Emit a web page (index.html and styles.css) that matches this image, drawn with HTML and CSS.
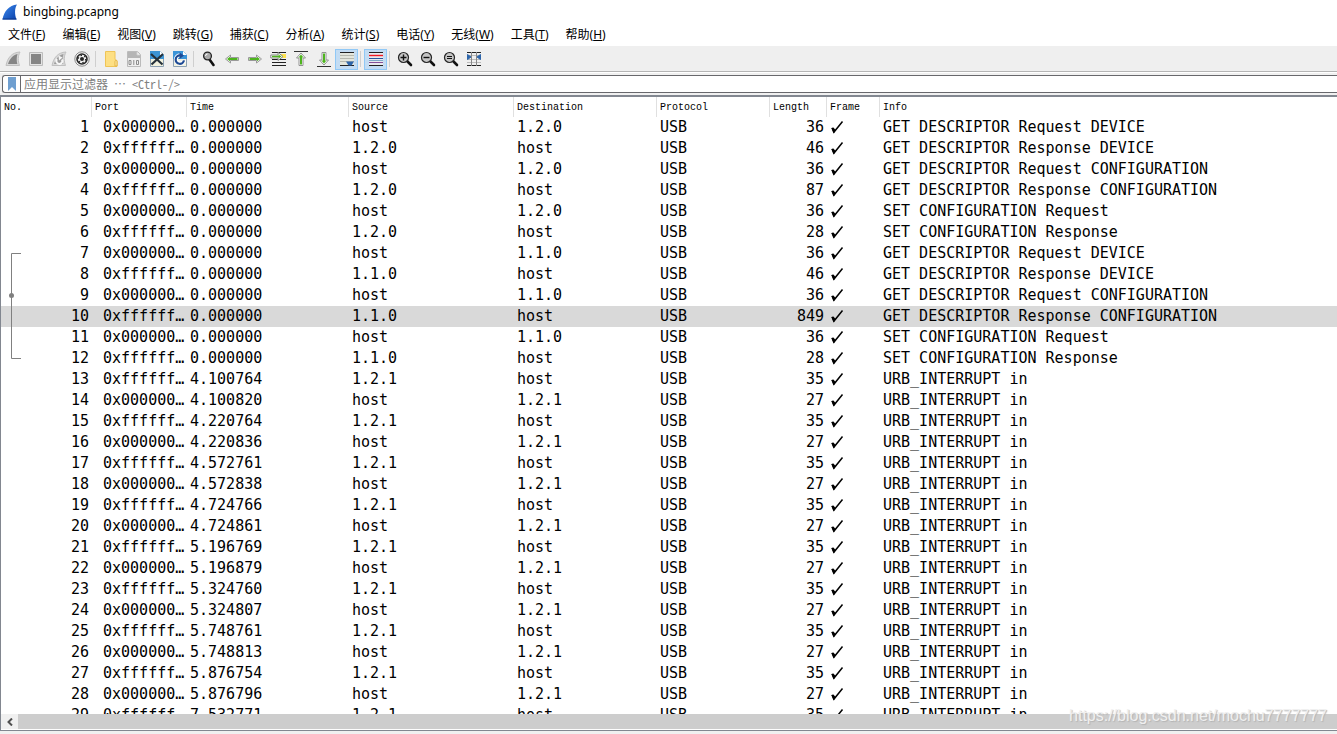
FILE: index.html
```html
<!DOCTYPE html>
<html lang="zh-CN">
<head>
<meta charset="utf-8">
<title>bingbing.pcapng</title>
<link rel="stylesheet" href="styles.css">
</head>
<body>
<div class="window">
  <header class="titlebar">
    <svg class="app-icon" width="16" height="16" viewBox="0 0 16 16" aria-hidden="true">
      <defs><linearGradient id="fin" x1="0" y1="0" x2="1" y2="1"><stop offset="0" stop-color="#3d8cf0"/><stop offset="1" stop-color="#0a3fa8"/></linearGradient></defs>
      <path d="M0.5 15.5C2 7 7 1.5 15 0.5C12.500 4.500 12.500 10 14.500 15.500Z" fill="url(#fin)"/>
      <path d="M0.500 15H14.500" stroke="#0a3588"/>
    </svg>
    <span>bingbing.pcapng</span>
  </header>
  <nav class="menubar">
    <button>文件(<u>F</u>)</button>
    <button>编辑(<u>E</u>)</button>
    <button>视图(<u>V</u>)</button>
    <button>跳转(<u>G</u>)</button>
    <button>捕获(<u>C</u>)</button>
    <button>分析(<u>A</u>)</button>
    <button>统计(<u>S</u>)</button>
    <button>电话(<u>Y</u>)</button>
    <button>无线(<u>W</u>)</button>
    <button>工具(<u>T</u>)</button>
    <button>帮助(<u>H</u>)</button>
  </nav>
  <div class="toolbar" role="toolbar">
    <button aria-label="Start capture"><svg viewBox="0 0 16 16"><path d="M1 14.500C2.500 7 6.500 1.500 15 1C12.800 5 12.800 10 14.500 14.500Z" fill="#d8d8d8" stroke="#c0c0c0"/><path d="M3 13C4.500 8 8 4 12.500 3C11.500 6 11.500 10 12.300 13Z" fill="#858585"/></svg></button>
    <button aria-label="Stop capture"><svg viewBox="0 0 16 16"><path d="M1.500 1.500h13v13h-13z" fill="#e4e4e4" stroke="#bdbdbd"/><path d="M3 3h10v10H3z" fill="#858585"/></svg></button>
    <button aria-label="Restart capture"><svg viewBox="0 0 16 16"><path d="M1 14.500C2.500 7 6.500 1.500 15 1C12.800 5 12.800 10 14.500 14.500Z" fill="#d8d8d8" stroke="#c0c0c0"/><path d="M3 13C4.500 8 8 4 12.500 3C11.500 6 11.500 10 12.300 13Z" fill="#9c9c9c"/><path d="M6 8a3 3 0 1 0 5 .5" fill="none" stroke="#f6f6f6" stroke-width="2"/><path d="M7.500 4.500l4 2-3.500 3z" fill="#f6f6f6"/></svg></button>
    <button aria-label="Capture options"><svg viewBox="0 0 16 16"><circle cx="8" cy="8" r="7.200" fill="#f6f6f6" stroke="#888"/><circle cx="8" cy="8" r="5" fill="#eee" stroke="#242424" stroke-width="1.600"/><circle cx="8" cy="8" r="3.700" fill="none" stroke="#242424" stroke-width="1.200" stroke-dasharray="1.500 2.370"/><circle cx="8" cy="8" r="2" fill="#242424"/></svg></button>
    <i class="sep"></i>
    <button aria-label="Open"><svg viewBox="0 0 16 16"><path d="M2.500 .500h9.500v8l2 1v6H2.500z" fill="#fddf83" stroke="#efc456"/><path d="M12 15V10.500q0-1 1-1t1 1V15z" fill="#fff0b8" stroke="#e5b440"/></svg></button>
    <button aria-label="Save"><svg viewBox="0 0 16 16"><path d="M1.500 .500h10l3 3v12h-13z" fill="#efefef" stroke="#bbb"/><path d="M2 1h9l3 3v3H2z" fill="#b5b5b5"/><path d="M11 1v3h3" fill="#fff" stroke="#ccc"/><path d="M3 9.500h2v4H3zM10.500 9.500h2v4h-2zM7.800 9v5" fill="none" stroke="#8c8c8c"/></svg></button>
    <button aria-label="Close"><svg viewBox="0 0 16 16"><path d="M1.500 .500h10l3 3v12h-13z" fill="#f2f2df" stroke="#8da1b3"/><path d="M1 0h10l4 4v4H1z" fill="#3d94d4"/><path d="M11 0v4h4" fill="#fff"/><path d="M2 3l11.500 10.500M14 3l-11.500 10.500" stroke="#26313a" stroke-width="2.200"/></svg></button>
    <button aria-label="Reload"><svg viewBox="0 0 16 16"><path d="M1.500 .500h10l3 3v12h-13z" fill="#f2f2df" stroke="#8da1b3"/><path d="M1 0h10l4 4v4H1z" fill="#3b94d8"/><path d="M11 0v4h4" fill="#fff"/><path d="M8 4.200a4.200 4.200 0 1 0 4.200 5" fill="none" stroke="#fff" stroke-width="4"/><path d="M8 4.400a4.200 4.200 0 1 0 4 5" fill="none" stroke="#1e4a94" stroke-width="2.200"/><path d="M7.500 1.500l4.500 3-4.500 3.500z" fill="#1e4a94"/></svg></button>
    <i class="sep"></i>
    <button aria-label="Find"><svg viewBox="0 0 16 16"><path d="M8.500 8.500l4 5.500" stroke="#111" stroke-width="2.600" stroke-linecap="round"/><circle cx="6.500" cy="5" r="3.900" fill="#aaa" stroke="#252525" stroke-width="1.300"/><path d="M4.500 5a2 2 0 0 1 2-2" fill="none" stroke="#fff"/></svg></button>
    <button aria-label="Previous packet"><svg viewBox="0 0 16 16"><path d="M1.500 8l5-4v2.500h8v3h-8v2.500z" fill="#fff" stroke="#999" stroke-linejoin="round"/><path d="M3 8l3-2.300v1.300h7.500v2H6v1.300z" fill="#4eb41e"/></svg></button>
    <button aria-label="Next packet"><svg viewBox="0 0 16 16"><path d="M14.500 8l-5-4v2.500h-8v3h8v2.500z" fill="#fff" stroke="#999" stroke-linejoin="round"/><path d="M13 8l-3-2.300v1.300H2.500v2H10v1.300z" fill="#4eb41e"/></svg></button>
    <button aria-label="Go to packet"><svg viewBox="0 0 16 16"><path d="M2 1.500h14M2 11.500h14M2 14.500h14" stroke="#222" stroke-width="1.200"/><path d="M11 3h5v4h-5z" fill="#ffe34d"/><path d="M2 8.500h14" stroke="#222"/><path d="M13 5.500l-5-4v2.500H.800v3H8v2.500z" fill="#fff" stroke="#888"/><path d="M11.500 5.500l-3-2v1.200H2v1.600h6.500v1.200z" fill="#4eb41e"/></svg></button>
    <button aria-label="First packet"><svg viewBox="0 0 16 16"><path d="M1 .500h14" stroke="#333"/><path d="M8 2l4.500 5h-2.500v7.500H6V7H3.500z" fill="#fff" stroke="#929292" stroke-linejoin="round"/><path d="M8 3.500l2.500 3H9v7H7v-7H5.500z" fill="#4eb41e"/></svg></button>
    <button aria-label="Last packet"><svg viewBox="0 0 16 16"><path d="M1 15.500h14" stroke="#333"/><path d="M8 14l4.500-5h-2.500V1.500H6V9H3.500z" fill="#fff" stroke="#929292" stroke-linejoin="round"/><path d="M8 12.500l2.500-3H9v-7H7v7H5.500z" fill="#4eb41e"/></svg></button>
    <button class="on" aria-label="Auto scroll" aria-pressed="true"><svg viewBox="0 0 16 16"><path d="M1 2h14v12H1z" fill="#e4e6dc"/><path d="M1 1.500h14M1 14.500h14" stroke="#222"/><path d="M1 4.500h14M1 7.500h14M1 10.500h14" stroke="#b6b8ae"/><path d="M7 10.500h8l-2.500 4h-3z" fill="#2d65aa"/></svg></button>
    <i class="sep"></i>
    <button class="on" aria-label="Colorize" aria-pressed="true"><svg viewBox="0 0 16 16"><path d="M1 1h14v14H1z" fill="#e9e9ee"/><path d="M1 1.500h14M1 14.500h14" stroke="#222"/><path d="M1 4.500h14" stroke="#f01822" stroke-width="1.400"/><path d="M1 7.500h14" stroke="#28569c"/><path d="M1 9.500h14" stroke="#7fa9c9"/><path d="M1 11.500h14" stroke="#855099"/></svg></button>
    <i class="sep"></i>
    <button aria-label="Zoom in"><svg viewBox="0 0 16 16"><path d="M10.500 10.500l3.500 3.500" stroke="#111" stroke-width="2.600" stroke-linecap="round"/><circle cx="6.500" cy="6.500" r="5" fill="#c5c5c5" stroke="#252525" stroke-width="1.200"/><path d="M3.500 6.500h6M6.500 3.500v6" stroke="#111" stroke-width="1.400"/></svg></button>
    <button aria-label="Zoom out"><svg viewBox="0 0 16 16"><path d="M10.500 10.500l3.500 3.500" stroke="#111" stroke-width="2.600" stroke-linecap="round"/><circle cx="6.500" cy="6.500" r="5" fill="#c5c5c5" stroke="#252525" stroke-width="1.200"/><path d="M3.500 6.500h6" stroke="#111" stroke-width="1.400"/></svg></button>
    <button aria-label="Normal size"><svg viewBox="0 0 16 16"><path d="M10.500 10.500l3.500 3.500" stroke="#111" stroke-width="2.600" stroke-linecap="round"/><circle cx="6.500" cy="6.500" r="5" fill="#c5c5c5" stroke="#252525" stroke-width="1.200"/><path d="M4 5.500h5M4 7.500h5" stroke="#111"/></svg></button>
    <button aria-label="Resize columns"><svg viewBox="0 0 16 16"><path d="M1 1.500h14M1 14.500h14" stroke="#222"/><path d="M1 4.500h14M1 8.500h14M1 11.500h14" stroke="#bbb"/><path d="M5.500 1v14M10.500 1v14" stroke="#888"/><path d="M1.500 3.500l3.500 2.500-3.500 2.500zM14.500 3.500l-3.500 2.500 3.500 2.500z" fill="#2d65aa" stroke="#2d65aa"/></svg></button>
  </div>
  <div class="filter-row">
    <div class="filter">
      <button class="bookmark" aria-label="Bookmarks"><svg width="8" height="14" viewBox="0 0 8 14"><path d="M0 0h8v14l-4-4-4 4z" fill="#6f9fd0"/></svg></button>
      <input class="filter-input" type="text" aria-label="应用显示过滤器" placeholder="应用显示过滤器 ⋯ &lt;Ctrl-/&gt;">
    </div>
  </div>
  <main class="packets">
    <div class="list">
      <table>
        <colgroup><col class="c-no"><col class="c-port"><col class="c-time"><col class="c-src"><col class="c-dst"><col class="c-proto"><col class="c-len"><col class="c-frame"><col></colgroup>
        <thead><tr><th>No.</th><th>Port</th><th>Time</th><th>Source</th><th>Destination</th><th>Protocol</th><th>Length</th><th>Frame</th><th>Info</th></tr></thead>
        <tbody id="rows"></tbody>
      </table>
      <svg class="related" width="12" height="106" viewBox="0 0 12 106" aria-hidden="true"><path d="M12 .5H2.500V105.500H12" fill="none" stroke="#808080"/><circle cx="2.500" cy="42.500" r="2.500" fill="#808080"/></svg>
    </div>
    <div class="scrollbar">
      <button class="scroll-left" aria-label="Scroll left"><svg width="6" height="8" viewBox="0 0 6 8"><path d="M5 .5L1.500 4L5 7.500" fill="none" stroke="#505050" stroke-width="2"/></svg></button>
      <div class="thumb"></div>
    </div>
    <div class="watermark">https://blog.csdn.net/mochu7777777</div>
  </main>
  <footer class="edge"></footer>
</div>
<script src="packets.js"></script>
</body>
</html>
```

FILE: styles.css
```css
* { box-sizing: border-box; }

body {
  margin: 0;
  background: #fff;
  color: #000;
  font: 12px/16px "Noto Sans", "Noto Sans CJK SC", sans-serif;
}

button {
  margin: 0;
  padding: 0;
  border: 0;
  background: none;
  color: inherit;
  font: inherit;
}

.window {
  display: flex;
  flex-direction: column;
  height: 100vh;
  overflow: hidden;
}

.titlebar {
  display: flex;
  align-items: center;
  gap: 5px;
  height: 24px;
  padding-left: 2px;
}

.menubar {
  display: flex;
  align-items: center;
  gap: 17px;
  height: 22px;
  padding-left: 8px;
}

.menubar button { white-space: nowrap; }

.toolbar {
  display: flex;
  align-items: center;
  height: 26px;
  padding: 1px 0 0 1px;
  background: #efefef;
  border-bottom: 1px solid #b4b4b4;
}

.toolbar button {
  display: flex;
  align-items: center;
  justify-content: center;
  width: 23px;
  height: 21px;
}

.toolbar svg { width: 16px; height: 16px; }

.toolbar .on {
  background: #c3dcf3;
  border: 1px solid #90c8f6;
}

.sep {
  width: 1px;
  height: 16px;
  margin: 0 3px 0 2px;
  background: #cfcfcf;
}

.filter-row {
  padding: 3px 0 2px 2px;
  background: linear-gradient(#fff 1px, #f0f0f0 1px);
}

.filter {
  display: flex;
  height: 18px;
  background: #fff;
  border: 1px solid #68686c;
  border-right: 0;
  border-radius: 3px 0 0 3px;
}

.bookmark {
  display: flex;
  align-items: center;
  justify-content: center;
  width: 18px;
  border-right: 1px solid #68686c;
}

.filter-input {
  flex: 1;
  min-width: 0;
  padding: 0 3px;
  border: 0;
  outline: 0;
  background: none;
  font: 12px/16px "Noto Sans Mono CJK SC", "Noto Sans CJK SC", sans-serif;
}

.filter-input::placeholder { color: #808080; opacity: 1; }

.packets {
  position: relative;
  display: flex;
  flex: 1;
  flex-direction: column;
  min-height: 0;
  border: 1px solid #828790;
  border-top-width: 2px;
  border-right: 0;
}

.list {
  position: relative;
  flex: 1;
  min-height: 0;
  overflow: hidden;
}

table {
  width: 100%;
  table-layout: fixed;
  border-collapse: separate;
  border-spacing: 0;
}

.c-no { width: 91px; }
.c-port { width: 95px; }
.c-time { width: 162px; }
.c-src { width: 165px; }
.c-dst { width: 143px; }
.c-proto { width: 113px; }
.c-len { width: 57px; }
.c-frame { width: 53px; }

th {
  height: 20px;
  padding: 2px 3px 0;
  border-right: 1px solid #e0e0e0;
  font: 10px/18px "Liberation Mono", monospace;
  text-align: left;
}

th:last-child { border-right: 0; }

td {
  height: 21px;
  padding: 0 3px;
  overflow: hidden;
  font: 15px/21px "DejaVu Sans Mono", monospace;
  white-space: nowrap;
}

.num { text-align: right; }
.port { padding: 0 0 0 11px; }
.check svg { display: block; }
.selected { background: #d9d9d9; }

.related {
  position: absolute;
  top: 156px;
  left: 8px;
}

.scrollbar {
  display: flex;
  height: 16px;
  border-bottom: 1px solid #fff;
  background: #f0f0f0;
}

.scroll-left {
  display: flex;
  align-items: center;
  justify-content: center;
  width: 17px;
}

.thumb { flex: 1; background: #cdcdcd; }

.watermark {
  position: absolute;
  right: 10px;
  bottom: 5px;
  color: #f0f0f0;
  font: 16px/18px "Liberation Sans", sans-serif;
  text-shadow: 1px 1px 1px #b4b4b4;
}

.edge { height: 3px; background: #f0f0f0; }
```

FILE: packets.js
```js
const info = [
  "GET DESCRIPTOR Request DEVICE",
  "GET DESCRIPTOR Response DEVICE",
  "GET DESCRIPTOR Request CONFIGURATION",
  "GET DESCRIPTOR Response CONFIGURATION",
  "SET CONFIGURATION Request",
  "SET CONFIGURATION Response"
];
const lengths = [36, 46, 36, 87, 36, 28, 36, 46, 36, 849, 36, 28];
const times = [
  "4.100764", "4.100820", "4.220764", "4.220836", "4.572761", "4.572838",
  "4.724766", "4.724861", "5.196769", "5.196879", "5.324760", "5.324807",
  "5.748761", "5.748813", "5.876754", "5.876796", "7.532771"
];

const packets = [];
lengths.forEach((length, i) => {
  packets.push({
    fromHost: i % 2 === 0,
    time: "0.000000",
    device: i < 6 ? "1.2.0" : "1.1.0",
    length,
    info: info[i % 6]
  });
});
times.forEach((time, i) => {
  packets.push({
    fromHost: i % 2 === 1,
    time,
    device: "1.2.1",
    length: i % 2 ? 27 : 35,
    info: "URB_INTERRUPT in"
  });
});

const tick = '<svg width="14" height="16" viewBox="0 0 14 16"><path d="M2 8L4 12L12.500 1.500" fill="none" stroke="#000" stroke-width="1.500"/><path d="M1.500 8L3.500 13.500L5.500 10L3.500 7.500z"/></svg>';

document.getElementById("rows").innerHTML = packets.map((p, i) => `
  <tr${i === 9 ? ' class="selected"' : ""}>
    <td class="num">${i + 1}</td>
    <td class="port">${p.fromHost ? "0x000000…" : "0xffffff…"}</td>
    <td>${p.time}</td>
    <td>${p.fromHost ? "host" : p.device}</td>
    <td>${p.fromHost ? p.device : "host"}</td>
    <td>USB</td>
    <td class="num">${p.length}</td>
    <td class="check">${tick}</td>
    <td>${p.info}</td>
  </tr>`).join("");
```
